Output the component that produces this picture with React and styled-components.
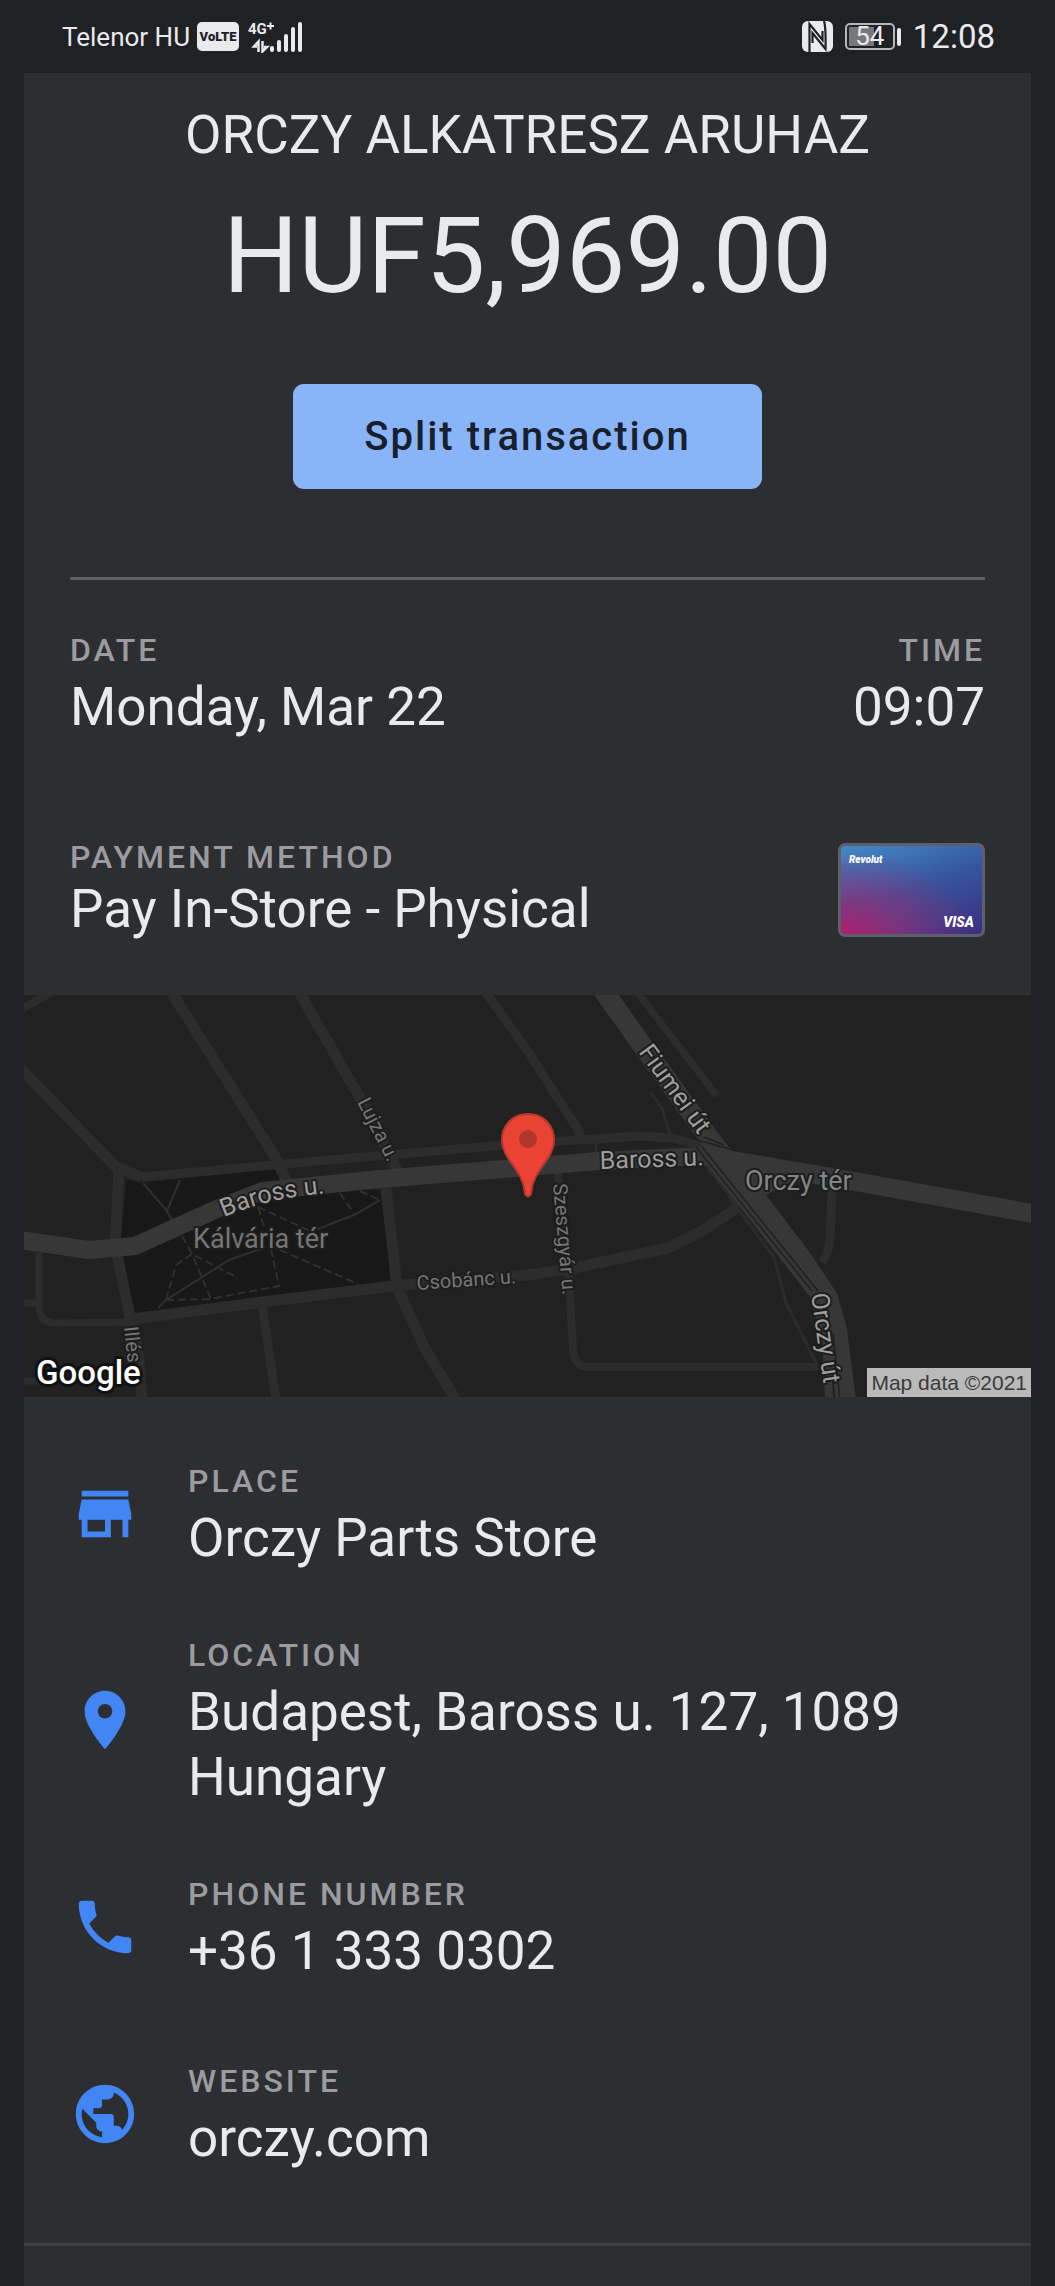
import React from 'react';
import styled, { createGlobalStyle } from 'styled-components';
import { MdStore, MdLocationOn, MdPhone, MdPublic } from 'react-icons/md';

const GlobalStyle = createGlobalStyle`
  *, *::before, *::after { box-sizing: border-box; }
  body {
    margin: 0;
    background: #202124;
    color: #e8eaed;
    font-family: Roboto, "Liberation Sans", sans-serif;
  }
`;

const Screen = styled.div`
  display: flex;
  flex-direction: column;
  min-height: 100vh;
`;

const StatusBar = styled.header`
  display: flex;
  align-items: center;
  justify-content: space-between;
  height: 73px;
  padding: 0 60px;
`;

const StatusGroup = styled.div`
  display: flex;
  align-items: center;
  gap: ${({ $gap }) => $gap}px;
`;

const Carrier = styled.span`
  font-size: 26px;
  line-height: 32px;
  padding-left: 2px;
`;

const VolteBadge = styled.span`
  width: 42px;
  height: 29px;
  margin-right: 2px;
  border-radius: 5px;
  background: #e8eaed;
  color: #202124;
  font-size: 13px;
  font-weight: 900;
  line-height: 29px;
  text-align: center;
`;

const Clock = styled.time`
  font-size: 33px;
  line-height: 40px;
`;

const Battery = styled.div`
  display: flex;
  align-items: center;
  gap: 2px;

  &::after {
    content: "";
    width: 4px;
    height: 18px;
    border-radius: 2px;
    background: #e8eaed;
  }
`;

const BatteryCell = styled.span`
  width: 50px;
  height: 27px;
  border: 2px solid #b4b6b9;
  border-radius: 5px;
  background: linear-gradient(90deg, #77787b 60%, transparent 60%) content-box;
  padding: 2px;
  font-size: 26px;
  line-height: 19px;
  text-align: center;
`;

const Sheet = styled.main`
  flex: 1;
  margin: 0 24px;
  background: #2d2e32;
`;

const Summary = styled.section`
  display: flex;
  flex-direction: column;
  align-items: center;
  padding: 30px 46px 0;
`;

const Merchant = styled.h1`
  margin: 0;
  font-size: 53px;
  font-weight: 400;
  line-height: 65px;
`;

const Amount = styled.p`
  margin: 33px 0 73px;
  font-size: 106px;
  line-height: 110px;
`;

const SplitButton = styled.button`
  width: 469px;
  height: 105px;
  border: 0;
  border-radius: 11px;
  background: #8ab4f8;
  color: #17202c;
  font: 500 40px/48px Roboto, "Liberation Sans", sans-serif;
  letter-spacing: 2px;
`;

const Rule = styled.hr`
  width: 100%;
  height: 3px;
  margin: 88px 0 0;
  border: 0;
  background: #5f6064;
`;

const Facts = styled.section`
  display: flex;
  flex-direction: column;
  gap: 97px;
  padding: 45px 46px 53px;
`;

const FactRow = styled.div`
  display: flex;
  align-items: center;
  justify-content: space-between;
`;

const Field = styled.dl`
  margin: 0;
  text-align: ${({ $end }) => ($end ? 'right' : 'left')};
`;

const Label = styled.dt`
  color: #9a9ca0;
  font-size: 32px;
  font-weight: 500;
  line-height: ${({ $tight }) => ($tight ? 40 : 50)}px;
  letter-spacing: 3px;
`;

const Value = styled.dd`
  margin: 0;
  font-size: 53px;
  line-height: 65px;
`;

const ValueLink = styled.a`
  color: inherit;
  text-decoration: none;
`;

const PaymentCard = styled.div`
  display: flex;
  flex-direction: column;
  justify-content: space-between;
  width: 147px;
  height: 94px;
  padding: 8px 8px 4px;
  border: 3px solid #5d5f6b;
  border-radius: 7px;
  background:
    radial-gradient(ellipse at 0% 105%, #b81c6c 0%, rgba(150, 45, 115, 0.7) 28%, transparent 68%),
    linear-gradient(160deg, #4285c4 5%, #36559f 50%, #3b3183 95%);
  color: #ffffff;
  font-style: italic;
  font-weight: 900;
`;

const Issuer = styled.span`
  font-size: 10px;
  line-height: 12px;
`;

const Network = styled.span`
  align-self: flex-end;
  font-size: 14px;
  line-height: 16px;
`;

const MapFrame = styled.figure`
  position: relative;
  margin: 0;
`;

const MapDrawing = styled.svg`
  display: block;
  width: 100%;
  height: auto;
  background: #212121;
  font-family: Roboto, "Liberation Sans", sans-serif;
`;

const Street = styled.path`
  fill: none;
  stroke: ${({ $main }) => ($main ? '#373737' : '#2c2c2c')};
  stroke-width: ${({ $w }) => $w};
  stroke-linejoin: round;
`;

const Trail = styled.path`
  fill: none;
  stroke: #303030;
  stroke-width: 2;
  stroke-dasharray: ${({ $dashed }) => ($dashed ? '8 4' : 'none')};
`;

const StreetName = styled.text`
  fill: ${({ $tone }) => $tone};
  font-size: ${({ $size }) => $size}px;
  stroke: #1d1d1d;
  stroke-width: 4px;
  stroke-linejoin: round;
  paint-order: stroke;
`;

const Brand = styled.text`
  fill: #ffffff;
  font-size: 33px;
  font-weight: 500;
  stroke: #111111;
  stroke-width: 6px;
  stroke-linejoin: round;
  paint-order: stroke;
`;

const Attribution = styled.figcaption`
  position: absolute;
  right: 0;
  bottom: 0;
  padding: 0 4px;
  background: #bababa;
  color: #3a3a3a;
  font: 21px/29px "Liberation Sans", Arial, sans-serif;
`;

const Details = styled.section`
  display: flex;
  flex-direction: column;
  padding-top: 59px;
  border-bottom: 3px solid #3c4043;
`;

const DetailRow = styled.div`
  display: flex;
  align-items: center;
  gap: 48px;
  margin: 0 46px ${({ $roomy }) => ($roomy ? 72 : 59)}px;

  > svg {
    flex: none;
    width: 70px;
    height: 70px;
    color: #4285f4;
  }
`;

function SignalIcon() {
  return (
    <svg width="56" height="32" viewBox="0 0 56 32" fill="#e8eaed" aria-hidden="true">
      <text x="0" y="13" fontSize="15" fontWeight="700">4G</text>
      <path d="M19 5h7M22.500 1.500v7" stroke="#e8eaed" strokeWidth="2" />
      <path d="M10.500 31V20.500L6 25.500h3M14.500 20v10.500L19 26h-3" fill="none" stroke="#e8eaed" strokeWidth="2.500" />
      <rect x="22" y="25" width="4" height="6" rx="2" />
      <rect x="29" y="19" width="4" height="12" rx="2" />
      <rect x="36" y="13" width="4" height="18" rx="2" />
      <rect x="43" y="6" width="4" height="25" rx="2" />
      <rect x="50" y="1" width="4" height="30" rx="2" />
    </svg>
  );
}

function NfcIcon() {
  return (
    <svg width="31" height="31" viewBox="0 0 31 31" aria-hidden="true">
      <rect width="31" height="31" rx="6" fill="#e8eaed" />
      <path
        d="M7.500 31V3L20.500 19V10M22 0Q24 6 23.500 28L10.500 12V22"
        fill="none"
        stroke="#202124"
        strokeWidth="2.200"
      />
    </svg>
  );
}

function StreetMap() {
  return (
    <MapFrame>
      <MapDrawing viewBox="24 995 1007 402" role="img" aria-label="Map of Baross u. and Orczy tér">
        <path d="M127 1180L141 1183L276 1169L292 1187L380 1190L393 1283L133 1313L119 1255Z" fill="#181818" />
        <Trail d="M143 1183L167 1211L172 1220M180 1180L167 1211M158 1308L166 1300L229 1260L266 1247M318 1229L354 1215L380 1200" />
        <Trail
          $dashed
          d="M182 1236L192 1254L238 1278M166 1300L176 1265L192 1254L212 1302M166 1300L210 1299L279 1286L270 1245M258 1207L310 1231M258 1207L265 1230M280 1250L358 1284M340 1193L354 1214M360 1191L380 1200"
        />

        <Street $w="8" d="M20 1010L52 992" />
        <Street $w="11" d="M20 1068L116 1167L141 1177" />
        <Street $w="9" d="M141 1177L283 1164L505 1145L577 1140L596 1139L638 1136L672 1138L712 1148" />
        <Street $w="11" d="M170 990L277 1160L288 1185" />
        <Street $w="11" d="M298 990L364 1105L400 1176" />
        <Street $w="9" d="M484 990L527 1050L580 1133L577 1140" />
        <Street $w="11" d="M119 1170L115 1245L130 1317L138 1350L142 1400" />
        <Street $w="11" d="M133 1319L270 1301L401 1285L528 1275L574 1268L668 1248L702 1231L737 1208" />
        <Street $w="7" d="M39 1253V1308Q40 1322 54 1323L135 1322M24 1303H38M24 1381H44" />
        <Street $w="11" d="M386 1188L397 1287L424 1347L456 1400" />
        <Street $w="9" d="M262 1305L276 1400" />
        <Street $w="7" d="M637 992L717 1096" />
        <Street $w="3" d="M650 1092L662 1108L671 1138M737 1208L774 1257L786 1303L817 1365M596 1140V1160" />
        <Street $w="8" d="M705 1160L731 1193L737 1208" />
        <Street $w="9" d="M832 1190L830 1240Q829 1252 822 1262" />
        <Street $w="8" d="M558 1173L569 1280L573 1350Q575 1367 588 1367H818" />

        <Street $main $w="18" d="M20 1240L89 1250L135 1246L219 1208L263 1191L380 1179L528 1167L598 1161L705 1156" />
        <Street $main $w="19" d="M705 1156L830 1177L1035 1214" />
        <Street $main $w="20" d="M603 990L642 1045L716 1147L742 1180L803 1260L828 1298L837 1330L846 1400" />
        <Street $main $w="8" d="M702 1152L813 1294L826 1335L829 1400" />
        <path d="M704 1148L820 1168L764 1196L742 1190Z" fill="#373737" />
        <path
          d="M690 1138L730 1149L800 1160M696 1147L812 1291M702 1147L818 1291M704 1137L724 1145M833 1333L840 1400"
          fill="none"
          stroke="#202020"
          strokeWidth="1.500"
        />

        <path id="baross-west" d="M224 1217Q270 1197 330 1193" fill="none" />
        <StreetName $tone="#9e9e9e" $size={25}><textPath href="#baross-west">Baross u.</textPath></StreetName>
        <StreetName $tone="#9e9e9e" $size={25} transform="translate(600 1169) rotate(-2)">Baross u.</StreetName>
        <StreetName $tone="#757575" $size={27} x="193" y="1248">Kálvária tér</StreetName>
        <StreetName $tone="#858585" $size={27} x="745" y="1190">Orczy tér</StreetName>
        <StreetName $tone="#757575" $size={20} transform="translate(417 1290) rotate(-4)">Csobánc u.</StreetName>
        <StreetName $tone="#757575" $size={20} transform="translate(357 1102) rotate(63)">Lujza u.</StreetName>
        <StreetName $tone="#757575" $size={20} transform="translate(553 1184) rotate(85)">Szeszgyár u.</StreetName>
        <StreetName $tone="#757575" $size={20} transform="translate(124 1327) rotate(84)">Illés</StreetName>
        <StreetName $tone="#9e9e9e" $size={25} transform="translate(638 1052) rotate(54)">Fiumei út</StreetName>
        <StreetName $tone="#9e9e9e" $size={25} transform="translate(811 1294) rotate(82)">Orczy út</StreetName>

        <path
          d="M528 1114C512 1114 502 1126 502 1140C502 1160 524 1170 525 1194Q528 1199 531 1194C532 1170 554 1160 554 1140C554 1126 544 1114 528 1114Z"
          fill="#ea4335"
          stroke="#b8382c"
          strokeWidth="2"
        />
        <circle cx="528" cy="1139" r="9" fill="#b1362a" />
        <Brand x="36" y="1384">Google</Brand>
      </MapDrawing>
      <Attribution>Map data ©2021</Attribution>
    </MapFrame>
  );
}

function Detail({ icon: Icon, label, roomy, children }) {
  return (
    <DetailRow $roomy={roomy}>
      <Icon aria-hidden="true" />
      <Field>
        <Label>{label}</Label>
        <Value>{children}</Value>
      </Field>
    </DetailRow>
  );
}

export default function App() {
  return (
    <Screen>
      <GlobalStyle />
      <StatusBar>
        <StatusGroup $gap={7}>
          <Carrier>Telenor HU</Carrier>
          <VolteBadge>VoLTE</VolteBadge>
          <SignalIcon />
        </StatusGroup>
        <StatusGroup $gap={12}>
          <NfcIcon />
          <Battery>
            <BatteryCell>54</BatteryCell>
          </Battery>
          <Clock>12:08</Clock>
        </StatusGroup>
      </StatusBar>

      <Sheet>
        <Summary>
          <Merchant>ORCZY ALKATRESZ ARUHAZ</Merchant>
          <Amount>HUF5,969.00</Amount>
          <SplitButton type="button">Split transaction</SplitButton>
          <Rule />
        </Summary>

        <Facts>
          <FactRow>
            <Field>
              <Label>DATE</Label>
              <Value>Monday, Mar 22</Value>
            </Field>
            <Field $end>
              <Label>TIME</Label>
              <Value>09:07</Value>
            </Field>
          </FactRow>
          <FactRow>
            <Field>
              <Label $tight>PAYMENT METHOD</Label>
              <Value>Pay In-Store - Physical</Value>
            </Field>
            <PaymentCard>
              <Issuer>Revolut</Issuer>
              <Network>VISA</Network>
            </PaymentCard>
          </FactRow>
        </Facts>

        <StreetMap />

        <Details>
          <Detail icon={MdStore} label="PLACE">Orczy Parts Store</Detail>
          <Detail icon={MdLocationOn} label="LOCATION">
            Budapest, Baross u. 127, 1089
            <br />
            Hungary
          </Detail>
          <Detail icon={MdPhone} label="PHONE NUMBER" roomy>
            <ValueLink href="tel:+3613330302">+36 1 333 0302</ValueLink>
          </Detail>
          <Detail icon={MdPublic} label="WEBSITE" roomy>
            <ValueLink href="https://orczy.com">orczy.com</ValueLink>
          </Detail>
        </Details>
      </Sheet>
    </Screen>
  );
}
